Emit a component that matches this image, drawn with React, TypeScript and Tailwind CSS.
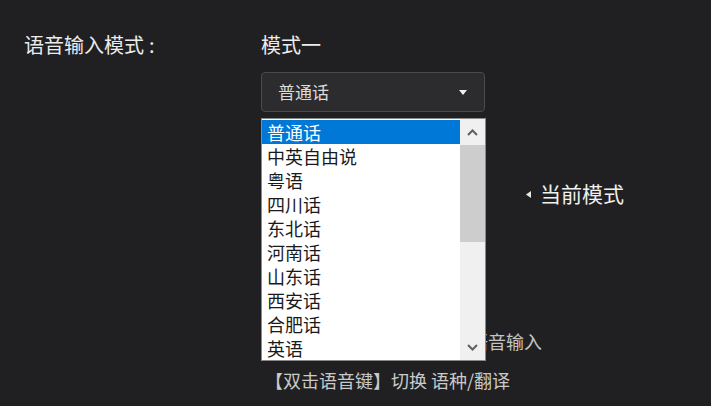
import React from "react";

const items = ["普通话", "中英自由说", "粤语", "四川话", "东北话", "河南话", "山东话", "西安话", "合肥话", "英语"];

export default function App() {
  const font = { fontFamily: '"Noto Sans CJK SC", "Noto Sans", sans-serif' };
  return (
    <div
      className="relative w-[711px] h-[406px] overflow-hidden bg-[#202022] flex"
      style={font}
    >
      <div className="w-[261px] pl-[24px] pt-[32px] text-[20px] leading-[26px] text-[#ececec] whitespace-nowrap">
        语音输入模式<span className="ml-[5px]">:</span>
      </div>
      <div className="flex flex-col pt-[32px]">
        <div className="text-[20px] leading-[26px] text-[#ececec]">模式一</div>
        <div className="mt-[14px] w-[224px] h-[40px] rounded-[4px] border border-[#4a4a4c] bg-[#2c2c2e] flex items-center justify-between pl-[16px] pr-[17px]">
          <span className="text-[17px] text-[#dcdcdc]">普通话</span>
          <svg width="8" height="5" viewBox="0 0 8 5">
            <path d="M0 0 H8 L4 5 Z" fill="#f0f0f0" />
          </svg>
        </div>
        <div className="h-[69px]" />
        <div className="flex items-center ml-[265px] h-[26px]">
          <svg width="5" height="7" viewBox="0 0 5 7" className="mr-[9px]">
            <path d="M5 0 V7 L0 3.5 Z" fill="#e8e8e8" />
          </svg>
          <span className="text-[21px] text-[#f0f0f0] whitespace-nowrap">当前模式</span>
        </div>
        <div className="h-[122px]" />
        <div className="ml-[4px] text-[18px] leading-[24px] text-[#c4c4c4] whitespace-nowrap">
          【单击语音键】开始/结束语音输入
        </div>
        <div className="mt-[15px] ml-[4px] text-[18px] leading-[24px] text-[#cacaca] whitespace-nowrap">
          【双击语音键】切换 语种/翻译
        </div>
      </div>

      <div className="absolute left-[261px] top-[118px] w-[225px] h-[243px] border border-[#8a8a8a] bg-white flex">
        <div className="flex-1 pt-[1px]">
          {items.map((it, i) => (
            <div
              key={it}
              className={
                "h-[24px] pl-[5px] text-[18px] leading-[24px] whitespace-nowrap " +
                (i === 0 ? "bg-[#0078d7] text-white" : "text-[#1a1a1a]")
              }
            >
              {it}
            </div>
          ))}
        </div>
        <div className="w-[25px] bg-[#f0f0f0] flex flex-col">
          <div className="h-[26px] flex items-center justify-center">
            <svg width="11" height="7" viewBox="0 0 11 7">
              <path d="M1 6 L5.5 1.5 L10 6" stroke="#606060" strokeWidth="2" fill="none" />
            </svg>
          </div>
          <div className="h-[97px] bg-[#cdcdcd]" />
          <div className="flex-1" />
          <div className="h-[26px] flex items-center justify-center">
            <svg width="11" height="7" viewBox="0 0 11 7">
              <path d="M1 1 L5.5 5.5 L10 1" stroke="#606060" strokeWidth="2" fill="none" />
            </svg>
          </div>
        </div>
      </div>
    </div>
  );
}
